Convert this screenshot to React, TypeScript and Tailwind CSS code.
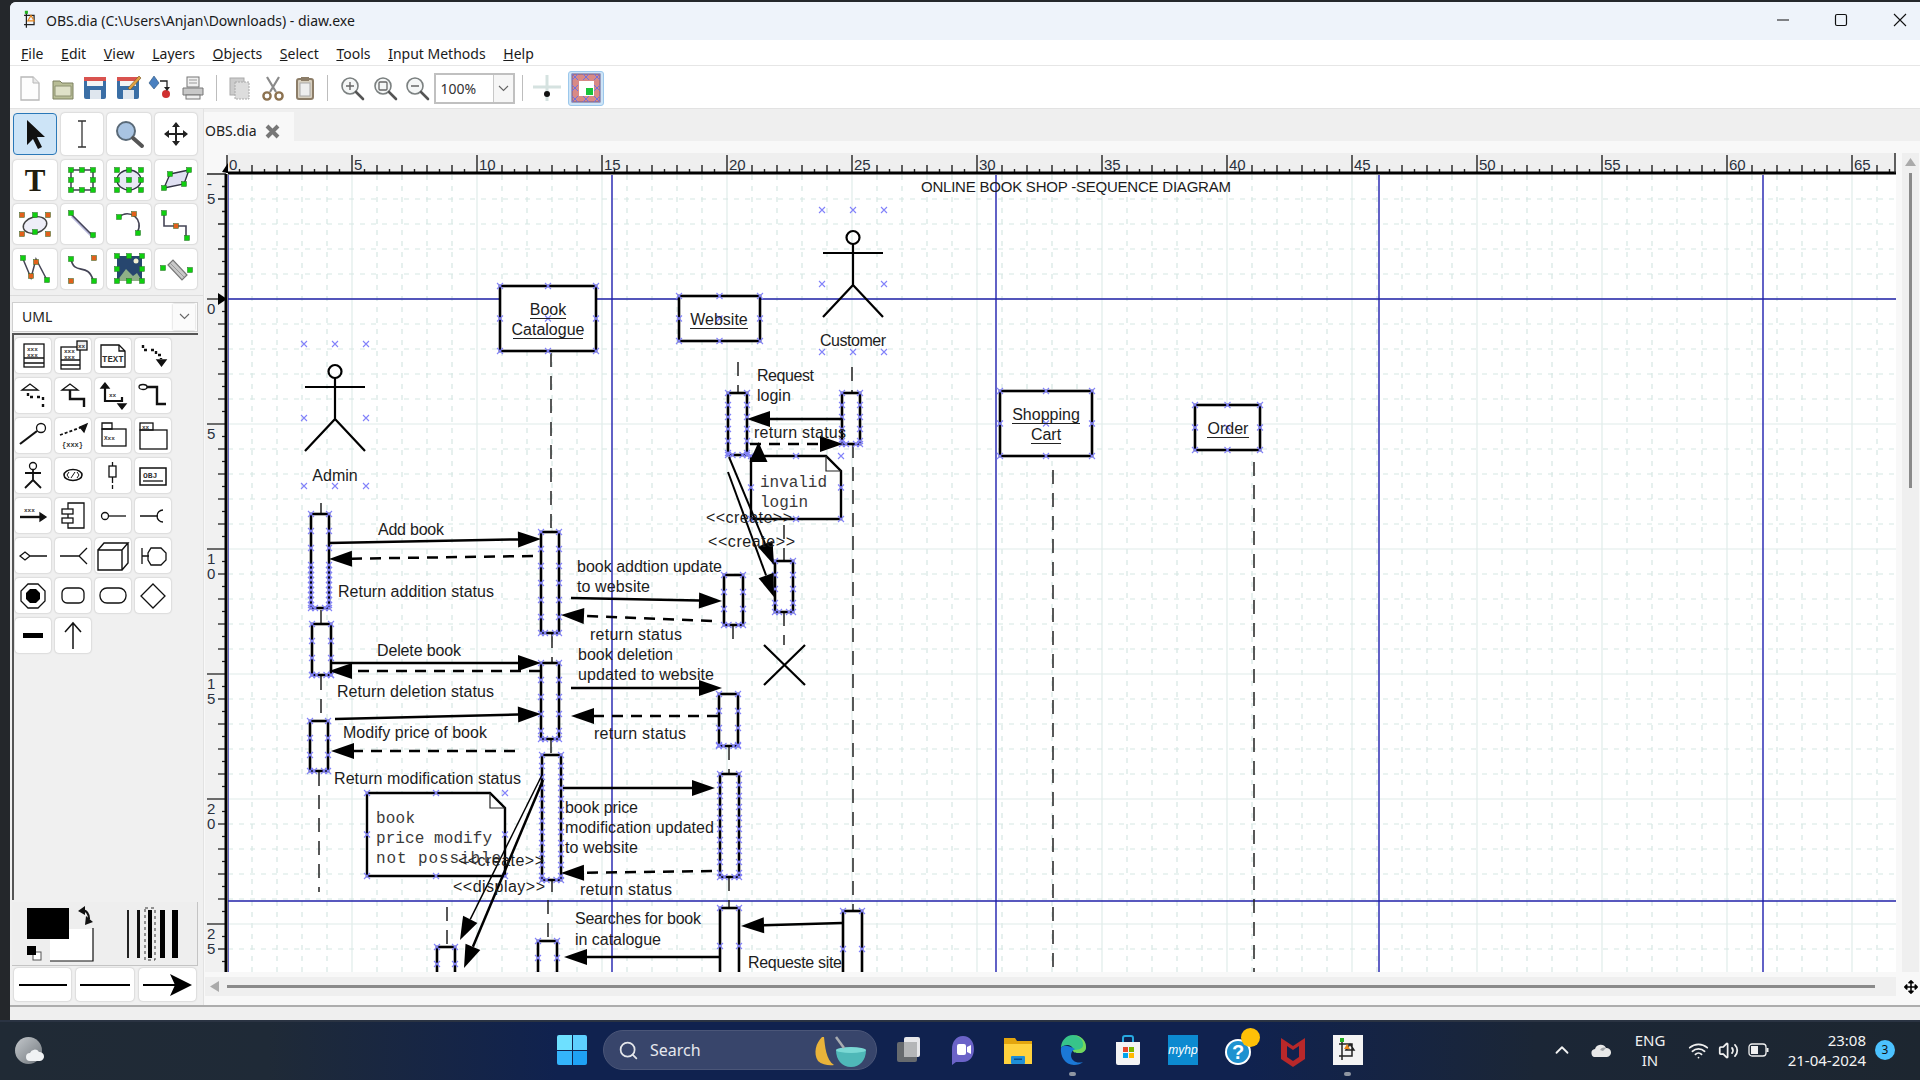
import React from "react";
import { Search, Wifi, Volume2, ChevronUp } from "lucide-react";
import { FaArrowsAlt } from "react-icons/fa";

const sans = "font-['Liberation_Sans',sans-serif]";
const ui = "font-['Noto_Sans',sans-serif]";

const menus = [
  ["F", "ile"],
  ["E", "dit"],
  ["V", "iew"],
  ["L", "ayers"],
  ["O", "bjects"],
  ["S", "elect"],
  ["T", "ools"],
  ["I", "nput Methods"],
  ["H", "elp"],
];

// ---- toolbar icons ----
const Tb = ({ children }: { children: React.ReactNode }) => (
  <div className="w-[32.5px] h-[32px] flex items-center justify-center shrink-0">
    <svg width="28" height="28" viewBox="0 0 28 28">{children}</svg>
  </div>
);
const Sep = ({ cls }: { cls: string }) => <div className={`w-[1px] h-[26px] bg-[#bdbdbd] shrink-0 ${cls}`} />;

const toolbarA = (
  <>
    <Tb>
      <path d="M5 3h12l6 6v17H5z" fill="#fdfdfd" stroke="#b8b8b8" strokeWidth="1.3" />
      <path d="M17 3v6h6" fill="#e8e8e8" stroke="#b8b8b8" />
    </Tb>
    <Tb>
      <path d="M4 7h7l2 2h11v16H4z" fill="#b8bd96" stroke="#7c8060" />
      <path d="M6 12h16v10H6z" fill="#dfe1c8" stroke="#8e9272" />
    </Tb>
    <Tb>
      <rect x="3" y="3" width="22" height="22" rx="2" fill="#3a6ea5" />
      <rect x="6" y="3" width="16" height="9" fill="#f4f4f4" />
      <rect x="3" y="3" width="22" height="4" fill="#d9534f" />
      <rect x="9" y="16" width="11" height="9" fill="#dfe6ee" />
    </Tb>
    <Tb>
      <rect x="3" y="3" width="22" height="22" rx="2" fill="#3a6ea5" />
      <rect x="6" y="3" width="16" height="9" fill="#f4f4f4" />
      <rect x="3" y="3" width="22" height="4" fill="#d9534f" />
      <rect x="9" y="16" width="11" height="9" fill="#dfe6ee" />
      <path d="M14 14L25 2l2 2-11 12z" fill="#e0a040" stroke="#705020" strokeWidth=".6" />
    </Tb>
    <Tb>
      <path d="M8 2l5 7-5 6-5-6z" fill="#4a80c0" stroke="#28507a" strokeWidth=".6" />
      <path d="M14 7h7v6" fill="none" stroke="#222" strokeWidth="1.3" />
      <circle cx="20" cy="20" r="4" fill="#d03030" />
      <path d="M18 13h6l-3 4z" fill="#222" />
    </Tb>
    <Tb>
      <rect x="8" y="3" width="12" height="10" fill="#f0f0f0" stroke="#777" />
      <path d="M10 6h8M10 9h8" stroke="#999" />
      <path d="M4 14h20v7H4z" fill="#c8c8c8" stroke="#777" />
      <rect x="7" y="21" width="14" height="4" fill="#eee" stroke="#777" />
    </Tb>
  </>
);
const toolbarB = (
  <>
    <Tb>
      <rect x="4" y="4" width="14" height="17" fill="#ccc" stroke="#aaa" />
      <rect x="9" y="8" width="14" height="17" fill="#ddd" stroke="#aaa" strokeDasharray="2 1" />
    </Tb>
    <Tb>
      <path d="M8 3l9 15M20 3l-9 15" stroke="#8a8a8a" strokeWidth="2.2" />
      <circle cx="8" cy="22" r="3.6" fill="none" stroke="#8c7250" strokeWidth="2.4" />
      <circle cx="20" cy="22" r="3.6" fill="none" stroke="#8c7250" strokeWidth="2.4" />
    </Tb>
    <Tb>
      <rect x="6" y="5" width="16" height="20" rx="2" fill="#d8d0c0" stroke="#8c7d68" strokeWidth="2" />
      <rect x="9" y="9" width="10" height="13" fill="#eee" stroke="#aaa" />
      <rect x="10" y="3" width="8" height="4" fill="#8c7d68" />
    </Tb>
  </>
);
const Zoom = ({ kind }: { kind: "in" | "fit" | "out" }) => (
  <Tb>
    <circle cx="12" cy="12" r="8" fill="#f4f6f6" stroke="#7b8080" strokeWidth="1.6" />
    <path d="M18 18l7 7" stroke="#555" strokeWidth="2.6" strokeLinecap="round" />
    {kind !== "fit" && <path d="M8 12h8" stroke="#666" strokeWidth="1.4" />}
    {kind === "in" && <path d="M12 8v8" stroke="#666" strokeWidth="1.4" />}
    {kind === "fit" && <rect x="8" y="8" width="8" height="8" rx="1" fill="none" stroke="#666" strokeWidth="1.3" />}
  </Tb>
);

// ---- toolbox icons ----
const G = ({ x, y, c = "#0fd00f" }: { x: number; y: number; c?: string }) => (
  <rect x={x - 2.5} y={y - 2.5} width="5" height="5" fill={c} stroke="#2a6a2a" strokeWidth=".5" />
);
const O = ({ x, y }: { x: number; y: number }) => <G x={x} y={y} c="#e2601a" />;

const Tool = ({ children, on, w, h }: { children: React.ReactNode; on?: boolean; w: string; h: string }) => (
  <div
    className={`${w} ${h} rounded-[4px] flex items-center justify-center ${
      on
        ? "bg-[#cde4f7] border border-[#2a78b8]"
        : "bg-white shadow-[0_0_2px_rgba(0,0,0,0.28)]"
    }`}
  >
    <svg width="40" height="38" viewBox="0 0 40 38">{children}</svg>
  </div>
);

const shade = "#b8b8dc";
const tools: React.ReactNode[] = [
  <path d="M12 5v25l6-6 5 10 4-2-5-10h8z" fill="#111" />,
  <path d="M16 6h8M20 6v26M16 32h8" stroke="#333" strokeWidth="1.3" fill="none" />,
  <>
    <circle cx="17" cy="16" r="9" fill="#a9c4e2" stroke="#5a6a78" strokeWidth="2" />
    <path d="M24 23l9 8" stroke="#555" strokeWidth="4" strokeLinecap="round" />
  </>,
  <path d="M20 7l4 5h-3v6h6v-3l5 4-5 4v-3h-6v6h3l-4 5-4-5h3v-6h-6v3l-5-4 5-4v3h6v-6h-3z" fill="#222" />,
  <text x="20" y="30" textAnchor="middle" fontFamily="Liberation Serif" fontWeight="bold" fontSize="31" fill="#211d10">T</text>,
  <>
    <rect x="9" y="9" width="22" height="20" fill="none" stroke="#334" strokeWidth="1.4" />
    {[[9, 9], [20, 9], [31, 9], [9, 19], [31, 19], [9, 29], [20, 29], [31, 29]].map(([x, y], i) => <G key={i} x={x} y={y} />)}
  </>,
  <>
    <ellipse cx="20" cy="19" rx="12" ry="10" fill="#e8e8f4" stroke="#334" strokeWidth="1.4" />
    {[[8, 9], [20, 9], [32, 9], [8, 19], [32, 19], [8, 29], [20, 29], [32, 29], [20, 19]].map(([x, y], i) => <G key={i} x={x} y={y} />)}
  </>,
  <>
    <path d="M14 13L33 9 28 23 8 27z" fill="#e0e0f2" stroke="#334" strokeWidth="1.4" />
    {[[14, 13], [33, 9], [28, 23], [8, 27]].map(([x, y], i) => <G key={i} x={x} y={y} />)}
  </>,
  <>
    <ellipse cx="20" cy="20" rx="12" ry="8" transform="rotate(-15 20 20)" fill="#eeeef8" stroke="#444" strokeWidth="1.4" />
    <O x={7} y={10} /><O x={33} y={10} /><O x={7} y={29} /><O x={33} y={29} />
    <G x={20} y={10} /><G x={20} y={27} />
  </>,
  <>
    <path d="M9 9l22 22" stroke={shade} strokeWidth="3" transform="translate(1,2)" />
    <path d="M9 9l22 22" stroke="#445" strokeWidth="1.4" />
    <G x={9} y={8} /><G x={31} y={30} />
  </>,
  <>
    <path d="M10 12C20 3 36 14 28 28" fill="none" stroke="#445" strokeWidth="1.6" />
    <G x={10} y={12} /><O x={25} y={9} /><G x={29} y={28} />
  </>,
  <>
    <path d="M8 8v13h22v13" fill="none" stroke="#445" strokeWidth="1.6" />
    <G x={8} y={8} /><O x={20} y={21} /><G x={31} y={33} />
  </>,
  <>
    <path d="M8 9l8 19 5-19 12 23" fill="none" stroke="#445" strokeWidth="1.5" />
    <G x={8} y={8} /><O x={16} y={26} /><O x={21} y={12} /><G x={32} y={30} />
  </>,
  <>
    <path d="M9 9C12 26 26 12 31 30" fill="none" stroke="#445" strokeWidth="1.6" />
    <G x={9} y={9} /><O x={32} y={8} /><O x={9} y={31} /><G x={32} y={31} />
  </>,
  <>
    <rect x="8" y="6" width="25" height="25" fill="#27466e" />
    <path d="M8 31l9-12 7 7 4-3 5 8z" fill="#8fb087" />
    <circle cx="27" cy="11" r="2.5" fill="#f3f0d0" />
    {[[8, 6], [20, 6], [33, 6], [8, 19], [33, 19], [8, 31], [20, 31], [33, 31]].map(([x, y], i) => <G key={i} x={x} y={y} />)}
  </>,
  <>
    <path d="M12 15l5-5 14 15-5 5z" fill="#c8c8c8" stroke="#777" strokeWidth="1.2" />
    <path d="M14 13l14 14" stroke="#999" />
    <G x={7} y={18} /><G x={34} y={20} />
  </>,
];

// ---- sheet icons ----
const mono = { fontFamily: "Liberation Mono", fontWeight: 700 };
const Sh = ({ children }: { children: React.ReactNode }) => (
  <div className="w-[36px] h-[35px] bg-white rounded-[4px] shadow-[0_0_2px_rgba(0,0,0,0.28)] flex items-center justify-center">
    <svg width="34" height="33" viewBox="0 0 34 33" fill="none" stroke="#111" strokeWidth="1.3">{children}</svg>
  </div>
);
const T = ({ x, y, s, t }: { x: number; y: number; s: number; t: string }) => (
  <text x={x} y={y} fontSize={s} fill="#333" stroke="none" style={mono}>{t}</text>
);
const sheet: React.ReactNode[] = [
  <><rect x="8" y="5" width="20" height="23" /><path d="M8 19h20M8 24h20" /><T x={11} y={12} s={6} t="xxx" /><T x={11} y={18} s={6} t="xxx" /></>,
  <><rect x="5" y="8" width="19" height="22" /><path d="M5 21h19M5 26h19" /><T x={8} y={14} s={6} t="xxx" /><T x={8} y={20} s={6} t="xxx" /><rect x="21" y="2" width="10" height="9" fill="#eee" /><T x={22} y={9} s={6} t="xx" /></>,
  <><path d="M5 6h18l6 6v16H5z" /><path d="M23 6v6h6" /><T x={6} y={23} s={9} t="TEXT" /></>,
  <><path d="M7 6v5h5M15 11h5v5h5v4" strokeWidth="2.4" strokeDasharray="3 3" /><path d="M21 21h9l-4.500 6z" fill="#111" /></>,
  <><path d="M6 11l8-6 8 6z" /><path d="M12 14v4h6M21 18h6v3M27 25v3" strokeWidth="2.4" strokeDasharray="3 3" /></>,
  <><path d="M6 11l8-6 8 6z" /><path d="M14 11v9h14v8" strokeWidth="2.4" /></>,
  <><path d="M9 4l-4 5h8zM26 30l-4-5h8z" fill="#111" /><path d="M9 8v14h17v-4" strokeWidth="2.2" /><T x={13} y={18} s={6} t="xx" /></>,
  <><ellipse cx="7" cy="8" rx="4" ry="2.500" /><path d="M11 8h10v17h9" strokeWidth="2.400" /></>,
  <><circle cx="25" cy="9" r="4.500" /><path d="M4 25l17-13" strokeWidth="2.200" /></>,
  <><path d="M4 16l22-8" strokeWidth="1.800" strokeDasharray="3 2" /><path d="M31 5l-3 8-4-5z" fill="#111" /><T x={6} y={28} s={7} t="{xxx}" /></>,
  <><path d="M6 4h10v6H6z" /><rect x="6" y="10" width="24" height="17" /><T x={8} y={21} s={6} t="Xxx" /></>,
  <><rect x="4" y="4" width="13" height="7" /><rect x="4" y="11" width="27" height="19" /><T x={6} y={10} s={6} t="xx" /></>,
  <><circle cx="17" cy="7" r="3.500" /><path d="M17 11v10M9 14h16M17 21l-8 8M17 21l8 8" strokeWidth="1.800" /></>,
  <><ellipse cx="17" cy="16" rx="9" ry="5.500" strokeWidth="1.600" /><path d="M13 13l-2 3 2 3M21 13l2 3-2 3M15 19l4-6" strokeWidth="1" /></>,
  <><rect x="13" y="7" width="7" height="11" /><path d="M16.500 3v4M16.500 18v6M16.500 26v4" /></>,
  <><rect x="4" y="9" width="26" height="17" strokeWidth="1.500" /><T x={7} y={19} s={8} t="OBJ" /><path d="M7 22h20" /></>,
  <><T x={8} y={13} s={6} t="xxx" /><path d="M4 18h22" strokeWidth="2.400" /><path d="M24 14l6 4-6 4z" fill="#111" /></>,
  <><path d="M12 4h16v25H12z" /><rect x="6" y="10" width="11" height="5" fill="#fff" /><rect x="6" y="19" width="11" height="5" fill="#fff" /></>,
  <><circle cx="9" cy="17" r="3.500" /><path d="M13 17h17" /></>,
  <><path d="M4 17h18M27 11a6 6 0 0 0 0 12" /></>,
  <><path d="M4 17l5-4 5 4-5 4zM14 17h17" /></>,
  <><path d="M4 17h20M31 9l-8 8 8 8" /></>,
  <><path d="M2 11h24v20H2zM2 11l6-7h24l-6 7M26 31l6-7V4" strokeWidth="1.400" /></>,
  <><path d="M6 9v16M6 17h7" /><path d="M15 9h10l5 5v7l-5 5H15l-3-5v-7z" /></>,
  <><path d="M12 5h10l7 7v10l-7 7H12l-7-7V12z" /><path d="M14 10h6l4 4v6l-4 4h-6l-4-4v-6z" fill="#000" stroke="none" /></>,
  <><rect x="6" y="9" width="22" height="15" rx="5" /></>,
  <><rect x="4" y="9" width="26" height="15" rx="7" /></>,
  <><path d="M17 5l12 12-12 12L5 17z" /></>,
  <><rect x="7" y="14" width="20" height="5" fill="#000" stroke="none" /></>,
  <><path d="M17 30V5M9 13l8-9 8 9" strokeWidth="1.500" /></>,
];

// ---- diagram helpers ----
const C = ({ x, y }: { x: number; y: number }) => (
  <path d={`M${x - 3} ${y - 3}l6 6m0-6l-6 6`} stroke="#8282fa" strokeWidth="1.100" fill="none" />
);
const Act = ({ x1, y1, x2, y2, step = 17, dense }: { x1: number; y1: number; x2: number; y2: number; step?: number; dense?: number }) => {
  const ys: number[] = [];
  for (let y = y1; y <= y2; y += dense && y >= dense ? 5 : step) ys.push(y);
  return (
    <g>
      <rect x={x1} y={y1} width={x2 - x1} height={y2 - y1} fill="#fff" stroke="#000" strokeWidth="2.6" />
      {ys.map((y) => (
        <g key={y}>
          <C x={x1} y={y} />
          <C x={x2} y={y} />
        </g>
      ))}
      <C x={(x1 + x2) / 2 - 5} y={y2} />
      <C x={(x1 + x2) / 2 + 5} y={y2} />
      <C x={x2} y={y2} />
      <C x={x1} y={y2} />
    </g>
  );
};
const Msg = ({ x1, y1, x2, y2, dash, l = 23, h = 8, sw = 2.5 }: { x1: number; y1: number; x2: number; y2: number; dash?: boolean; l?: number; h?: number; sw?: number }) => {
  const d = Math.hypot(x2 - x1, y2 - y1);
  const ux = (x2 - x1) / d;
  const uy = (y2 - y1) / d;
  const bx = x2 - ux * l;
  const by = y2 - uy * l;
  return (
    <g>
      <line x1={x1} y1={y1} x2={bx} y2={by} stroke="#000" strokeWidth={sw} strokeDasharray={dash ? "11 8" : undefined} />
      <path d={`M${x2} ${y2}L${bx - uy * h} ${by + ux * h}L${bx + uy * h} ${by - ux * h}z`} fill="#000" />
    </g>
  );
};
const L = ({ x, y, w, t, u, mid, size = 16 }: { x: number; y: number; w?: number; t: string; u?: number; mid?: boolean; size?: number }) => (
  <g>
    <text
      x={x}
      y={y}
      fontSize={size}
      fill="#1c1c1c"
      textAnchor={mid ? "middle" : "start"}
      textLength={w}
      lengthAdjust={w ? "spacing" : undefined}
    >
      {t}
    </text>
    {u && <line x1={x - u / 2} x2={x + u / 2} y1={y + 3.500} y2={y + 3.500} stroke="#222" strokeWidth="1" />}
  </g>
);
const M = ({ x, y, t, w }: { x: number; y: number; t: string; w: number }) => (
  <text x={x} y={y} fontSize="16" fontFamily="Liberation Mono" fill="#3a3a3a" textLength={w}>
    {t}
  </text>
);
const Box = ({ x1, y1, x2, y2 }: { x1: number; y1: number; x2: number; y2: number }) => (
  <g>
    <rect x={x1} y={y1} width={x2 - x1} height={y2 - y1} fill="#fff" stroke="#000" strokeWidth="2.6" />
    {[x1, (x1 + x2) / 2, x2].map((x) =>
      [y1, (y1 + y2) / 2, y2].map((y) => <C key={`${x}-${y}`} x={x} y={y} />)
    )}
  </g>
);
const Note = ({ x1, y1, x2, y2, f }: { x1: number; y1: number; x2: number; y2: number; f: number }) => (
  <g>
    <path
      d={`M${x1} ${y1}H${x2 - f}L${x2} ${y1 + f}V${y2}H${x1}z`}
      fill="#fff"
      stroke="#000"
      strokeWidth="2.4"
    />
    <path d={`M${x2 - f} ${y1}v${f}h${f}`} fill="none" stroke="#222" strokeWidth="1.2" />
    {[x1, (x1 + x2) / 2, x2].map((x) => [y1, y2].map((y) => <C key={`${x}-${y}`} x={x} y={y} />))}
    <C x={x1} y={(y1 + y2) / 2} />
    <C x={x2} y={(y1 + y2) / 2} />
  </g>
);
const Actor = ({ cx, top }: { cx: number; top: number }) => (
  <g stroke="#000" fill="none">
    <circle cx={cx} cy={top + 6.500} r="6.500" strokeWidth="2.2" />
    <path d={`M${cx - 30} ${top + 22}h60M${cx} ${top + 13}v41l-30 32M${cx} ${top + 54}l30 32`} strokeWidth="2.2" />
    {[cx - 31, cx, cx + 31].map((x) => <C key={x} x={x} y={top - 21} />)}
    {[cx - 31, cx + 31].map((x) => <C key={x} x={x} y={top + 53} />)}
    {[cx - 31, cx, cx + 31].map((x) => <C key={x} x={x} y={top + 121} />)}
  </g>
);
const Life = ({ x, y1, y2 }: { x: number; y1: number; y2: number }) => (
  <line x1={x} y1={y1} x2={x} y2={y2} stroke="#222" strokeWidth="1.5" strokeDasharray="14 9" />
);

const xs = Array.from({ length: 67 }, (_, i) => 227 + i * 25);
const ys = Array.from({ length: 33 }, (_, i) => 174 + i * 25);

const TopRuler = () => {
  const t = Array.from({ length: 134 }, (_, i) => i);
  return (
    <g>
      <rect x="228" y="153" width="1668" height="21" fill="#efefef" />
      {t.map((i) => {
        const x = 227 + i * 12.5;
        const h = i % 10 === 0 ? 18 : i % 2 === 0 ? 8 : 4;
        return <line key={i} x1={x} x2={x} y1={173} y2={173 - h} stroke="#222" strokeWidth="1.4" />;
      })}
      {t.filter((i) => i % 10 === 0).map((i) => (
        <text key={i} x={229 + i * 12.5} y={170} fontSize="15" fill="#2a3140">{i / 2}</text>
      ))}
      <line x1="228" x2="1896" y1="173" y2="173" stroke="#000" strokeWidth="3" />
      <line x1="1895" x2="1895" y1="153" y2="173" stroke="#222" strokeWidth="1.4" />
      <path d="M228 163v10l-6-1z" fill="#000" />
    </g>
  );
};
const SideRuler = () => {
  const t = Array.from({ length: 66 }, (_, i) => i);
  const labels = [["-", "5"], ["0"], ["5"], ["1", "0"], ["1", "5"], ["2", "0"], ["2", "5"]];
  return (
    <g>
      <rect x="205" y="174" width="22" height="798" fill="#f1f1f1" />
      {t.map((i) => {
        const y = 174 + i * 12.5;
        const w = i % 10 === 0 ? 19 : i % 2 === 0 ? 8 : 4;
        return <line key={i} y1={y} y2={y} x1={226} x2={226 - w} stroke="#222" strokeWidth="1.3" />;
      })}
      {labels.map((l, i) =>
        l.map((c, j) => (
          <text key={`${i}${j}`} x={207} y={(i === 0 ? 189 : 174 + i * 125 + 15) + j * 15} fontSize="15" fill="#2a3140">{c}</text>
        ))
      )}
      <line x1="226" x2="226" y1="174" y2="972" stroke="#000" strokeWidth="3" />
      <path d="M218 293l9 6-9 6z" fill="#000" />
    </g>
  );
};

const Diagram = () => (
  <svg
    className={`block shrink-0 ${sans}`}
    width="1691"
    height="819"
    viewBox="205 153 1691 819"
  >
    <defs>
      <clipPath id="page">
        <rect x="228" y="175" width="1668" height="797" />
      </clipPath>
    </defs>
    <TopRuler />
    <SideRuler />
    <g clipPath="url(#page)">
      <rect x="228" y="175" width="1668" height="797" fill="#fff" />
      {xs.map((x, i) => (
        <line key={x} x1={x} x2={x} y1="175" y2="972" stroke={i % 5 === 0 ? "#e0ecea" : "#d6e7e3"} strokeWidth="1.2" strokeDasharray={i % 5 === 0 ? undefined : "5 6"} />
      ))}
      {ys.map((y, i) => (
        <line key={y} y1={y} y2={y} x1="228" x2="1896" stroke={i % 5 === 0 ? "#e0ecea" : "#d6e7e3"} strokeWidth="1.2" strokeDasharray={i % 5 === 0 ? undefined : "5 6"} />
      ))}
      {[228, 612, 996, 1379, 1763].map((x) => (
        <line key={x} x1={x} x2={x} y1="175" y2="972" stroke="#3a3ab8" strokeWidth="1.6" />
      ))}
      {[299, 901].map((y) => (
        <line key={y} y1={y} y2={y} x1="228" x2="1896" stroke="#2020a8" strokeWidth="1.5" />
      ))}

      {/* lifelines */}
      <Life x={321} y1={503} y2={516} />
      <Life x={321} y1={610} y2={624} />
      <Life x={321} y1={676} y2={722} />
      <Life x={319} y1={772} y2={892} />
      <Life x={551} y1={353} y2={532} />
      <Life x={552} y1={634} y2={663} />
      <Life x={551} y1={739} y2={755} />
      <Life x={552} y1={881} y2={892} />
      <Life x={548} y1={900} y2={941} />
      <Life x={447} y1={907} y2={947} />
      <Life x={738} y1={362} y2={393} />
      <Life x={733} y1={625} y2={645} />
      <Life x={729} y1={746} y2={774} />
      <Life x={729} y1={877} y2={908} />
      <Life x={852} y1={367} y2={393} />
      <Life x={853} y1={444} y2={911} />
      <Life x={784} y1={525} y2={561} />
      <Life x={784} y1={612} y2={645} />
      <Life x={1053} y1={470} y2={972} />
      <Life x={1254} y1={462} y2={972} />

      {/* objects */}
      <Box x1={500} y1={286} x2={596} y2={351} />
      <Box x1={679} y1={296} x2={760} y2={341} />
      <Box x1={1000} y1={391} x2={1092} y2={456} />
      <Box x1={1195} y1={405} x2={1260} y2={450} />
      <Actor cx={853} top={231} />
      <Actor cx={335} top={365} />
      <Note x1={751} y1={456} x2={841} y2={519} f={15} />
      <Note x1={367} y1={793} x2={505} y2={876} f={15} />

      {/* activations */}
      <Act x1={311} y1={514} x2={329} y2={608} dense={560} />
      <Act x1={312} y1={624} x2={331} y2={675} />
      <Act x1={310} y1={721} x2={328} y2={771} />
      <Act x1={541} y1={532} x2={559} y2={633} />
      <Act x1={541} y1={663} x2={559} y2={739} />
      <Act x1={542} y1={755} x2={561} y2={880} step={11} />
      <Act x1={538} y1={941} x2={557} y2={1000} />
      <Act x1={728} y1={393} x2={747} y2={455} step={12} />
      <Act x1={842} y1={393} x2={860} y2={444} step={12} />
      <Act x1={724} y1={575} x2={743} y2={625} />
      <Act x1={775} y1={561} x2={793} y2={612} step={14} />
      <Act x1={719} y1={694} x2={738} y2={746} />
      <Act x1={720} y1={774} x2={739} y2={877} step={11} />
      <Act x1={720} y1={908} x2={739} y2={1000} step={38} />
      <Act x1={843} y1={911} x2={862} y2={1000} step={38} />
      <Act x1={437} y1={947} x2={455} y2={1000} />

      {/* messages */}
      <Msg x1={329} y1={543} x2={541} y2={539} />
      <Msg x1={533} y1={556} x2={329} y2={559} dash />
      <Msg x1={571} y1={598} x2={722} y2={601} />
      <Msg x1={712} y1={621} x2={561} y2={615} dash />
      <Msg x1={332} y1={663} x2={541} y2={663} />
      <Msg x1={540} y1={671} x2={329} y2={671} dash />
      <Msg x1={335} y1={719} x2={541} y2={714} />
      <Msg x1={571} y1={688} x2={722} y2={688} />
      <Msg x1={718} y1={716} x2={571} y2={716} dash />
      <Msg x1={515} y1={751} x2={331} y2={751} dash />
      <Msg x1={563} y1={788} x2={715} y2={788} />
      <Msg x1={712} y1={871} x2={561} y2={873} dash />
      <Msg x1={842} y1={419} x2={747} y2={419} />
      <Msg x1={750} y1={444} x2={843} y2={444} dash />
      <path d="M758.500 442l9 20h-18z" fill="#000" />
      <Msg x1={729} y1={457} x2={774} y2={565} sw={2} />
      <Msg x1={728} y1={472} x2={774} y2={597} sw={2} />
      <Msg x1={542} y1={775} x2={460} y2={940} sw={1.5} />
      <Msg x1={543} y1={780} x2={464} y2={968} sw={2.5} />
      <Msg x1={842} y1={923} x2={741} y2={926} />
      <Msg x1={720} y1={957} x2={564} y2={957} />

      {/* X */}
      <path d="M764 645l41 40M805 645l-41 40" stroke="#000" strokeWidth="2.200" />

      {/* labels */}
      <L x={921} y={192} w={310} t="ONLINE BOOK SHOP -SEQUENCE DIAGRAM" size={15} />
      <L x={548} y={315} mid u={36} t="Book" />
      <L x={548} y={335} mid u={70} t="Catalogue" />
      <L x={719} y={325} mid u={58} t="Website" />
      <L x={1046} y={420} mid u={68} t="Shopping" />
      <L x={1046} y={440} mid u={30} t="Cart" />
      <L x={1228} y={434} mid u={42} t="Order" />
      <L x={853} y={346} mid w={66} t="Customer" />
      <L x={335} y={481} mid t="Admin" />
      <L x={757} y={381} w={57} t="Request" />
      <L x={757} y={401} t="login" />
      <L x={754} y={438} w={92} t="return status" />
      <L x={378} y={535} w={66} t="Add book" />
      <L x={338} y={597} w={156} t="Return addition status" />
      <L x={577} y={572} w={145} t="book addtion update" />
      <L x={577} y={592} w={73} t="to website" />
      <L x={590} y={640} w={92} t="return status" />
      <L x={578} y={660} w={95} t="book deletion" />
      <L x={578} y={680} w={136} t="updated to website" />
      <L x={377} y={656} w={84} t="Delete book" />
      <L x={337} y={697} w={157} t="Return deletion status" />
      <L x={343} y={738} w={144} t="Modify price of book" />
      <L x={594} y={739} w={92} t="return status" />
      <L x={334} y={784} w={187} t="Return modification status" />
      <L x={565} y={813} t="book price" w={73} />
      <L x={565} y={833} t="modification updated" w={149} />
      <L x={565} y={853} t="to website" w={73} />
      <L x={580} y={895} w={92} t="return status" />
      <L x={575} y={924} w={126} t="Searches for book" />
      <L x={575} y={945} w={86} t="in catalogue" />
      <L x={748} y={968} w={94} t="Requeste site" />
      <L x={706} y={523} w={86} t="<<create>>" />
      <L x={708} y={547} w={87} t="<<create>>" />
      <M x={760} y={487} w={67} t="invalid" />
      <M x={760} y={507} w={48} t="login" />
      <M x={376} y={823} w={39} t="book" />
      <M x={376} y={843} w={116} t="price modify" />
      <M x={376} y={863} w={125} t="not possible" />
      <L x={458} y={866} w={86} t="<<create>>" />
      <L x={453} y={892} w={92} t="<<display>>" />
    </g>
  </svg>
);

// ---- taskbar icons ----
const Bar = ({ children, w = 30 }: { children: React.ReactNode; w?: number }) => (
  <svg width={w} height="36" viewBox="0 0 30 36">{children}</svg>
);
const taskIcons: React.ReactNode[] = [
  <Bar>
    <rect x="4" y="10" width="20" height="20" rx="2" fill="#666a6e" />
    <rect x="11" y="5" width="16" height="20" rx="2" fill="#f2f2f2" opacity=".95" />
    <rect x="11" y="10" width="13" height="15" fill="#b4b6b8" />
  </Bar>,
  <Bar>
    <path d="M15 4c7 0 11 6 11 13s-4 13-11 13H8l-4 3V17C4 10 8 4 15 4z" fill="#6b63c8" />
    <rect x="9" y="12" width="9" height="11" rx="2" fill="#fff" />
    <path d="M19 15l4-2v9l-4-2z" fill="#fff" />
  </Bar>,
  <Bar>
    <path d="M1 6h11l2 3h15v23H1z" fill="#e3a50e" />
    <path d="M1 12h28v20H1z" fill="#ffd23e" />
    <rect x="8" y="24" width="14" height="8" rx="1" fill="#1f8fd8" />
    <rect x="11" y="26.500" width="8" height="1.500" fill="#0d4d8a" />
  </Bar>,
  <Bar>
    <path d="M15 3c8 0 13 6 13 12 0 4-3 6-7 6-2 0-6 0-6-3 0-5-8-7-12-2C3 9 8 3 15 3z" fill="#37c48a" />
    <path d="M3 16c-1 8 4 17 13 17 4 0 7-1 9-3-6 2-12-1-12-7 0-3 2-5 4-6-5-3-12-5-14-1z" fill="#1b78d6" />
    <path d="M15 18c0 3 4 3 6 3 4 0 7-2 7-6 0-6-5-12-13-12 7 1 11 6 10 11-1 3-5 4-10 4z" fill="#8fe04a" opacity=".7" />
  </Bar>,
  <Bar>
    <path d="M3 10h24v21a2 2 0 0 1-2 2H5a2 2 0 0 1-2-2z" fill="#f4f4f4" />
    <path d="M10 10V6a2 2 0 0 1 2-2h6a2 2 0 0 1 2 2v4" fill="none" stroke="#27a9e0" strokeWidth="2" />
    <rect x="10" y="15" width="5" height="5" fill="#e8492c" />
    <rect x="16" y="15" width="5" height="5" fill="#7bb800" />
    <rect x="10" y="21" width="5" height="5" fill="#00a4ef" />
    <rect x="16" y="21" width="5" height="5" fill="#ffb900" />
  </Bar>,
  <div className="w-[30px] h-[30px] bg-[#0c8ad0] flex items-center justify-center">
    <span className="text-white text-[12px] italic font-['Liberation_Sans',sans-serif]">myhp</span>
  </div>,
  <div className="relative w-[30px] h-[36px]">
    <svg width="30" height="36" viewBox="0 0 30 36">
      <circle cx="15" cy="20" r="13" fill="#fff" />
      <circle cx="15" cy="20" r="11" fill="#1f92d0" />
      <text x="15" y="27" textAnchor="middle" fontSize="20" fontWeight="bold" fill="#fff" fontFamily="Liberation Sans">?</text>
    </svg>
    <span className="absolute right-[-7px] top-[-4px] w-[19px] h-[19px] rounded-full bg-[#ffc107]" />
  </div>,
  <Bar>
    <path d="M3 6l12 8 12-8v21l-12 8-12-8z" fill="#b8282a" />
    <path d="M9 14l6 4 6-4v11l-6 4-6-4z" fill="#10224f" />
  </Bar>,
  <div className="w-[30px] h-[30px] bg-[#f4f4f4] flex items-center justify-center">
    <svg width="26" height="26" viewBox="0 0 26 26">
      <path d="M7 3v20M4 7h13v12H4M11 13l4-6 4 6z" fill="none" stroke="#222" strokeWidth="1.500" />
      <path d="M9 12l3-5 3 5z" fill="#e8871c" />
      <rect x="5" y="1" width="4" height="4" fill="#22b022" />
    </svg>
  </div>,
];

const App = () => (
  <div className="w-[1920px] h-[1080px] flex flex-col bg-[#24272b] overflow-hidden">
    <div className="flex-1 min-h-0 pl-[10px] pt-[2px] flex">
      <div className={`flex-1 flex flex-col bg-[#f0f0f0] rounded-tl-[6px] overflow-hidden ${ui}`}>
        {/* title bar */}
        <div className="h-[38px] shrink-0 bg-[#eef3fa] flex items-center pl-[11px] pb-[2px]">
          <svg width="20" height="20" viewBox="0 0 26 26">
            <path d="M7 3v20M4 7h13v12H4" fill="none" stroke="#222" strokeWidth="1.600" />
            <path d="M9 14l4-7 4 7z" fill="none" stroke="#e8871c" strokeWidth="1.600" />
            <rect x="5" y="1" width="4" height="4" fill="#22b022" />
          </svg>
          <span className="ml-[5px] text-[14px] text-[#1a1a1a]">OBS.dia (C:\Users\Anjan\Downloads) - diaw.exe</span>
          <div className="ml-auto flex items-center text-[#111]">
            <svg className="mr-[44px]" width="14" height="14" viewBox="0 0 14 14"><path d="M1 7h12" stroke="#111" strokeWidth="1.200" /></svg>
            <svg className="mr-[45px]" width="14" height="14" viewBox="0 0 14 14"><rect x="1.500" y="1.500" width="11" height="11" rx="1.500" fill="none" stroke="#111" strokeWidth="1.200" /></svg>
            <svg className="mr-[13px]" width="14" height="14" viewBox="0 0 14 14"><path d="M1 1l12 12M13 1L1 13" stroke="#111" strokeWidth="1.100" /></svg>
          </div>
        </div>
        {/* menu bar */}
        <div className="h-[26px] shrink-0 bg-white border-b border-[#e6e6e6] flex items-center pl-[11px] pt-[2px] gap-[17.700px] text-[14px] leading-none text-[#1a1a1a]">
          {menus.map(([a, b]) => (
            <span key={a}>
              <u>{a}</u>
              {b}
            </span>
          ))}
        </div>
        {/* toolbar */}
        <div className="h-[43px] shrink-0 bg-white border-b border-[#e2e2e2] flex items-center pl-[4px] pt-[2px]">
          {toolbarA}
          <Sep cls="ml-[7px]" />
          <div className="w-[7px]" />
          {toolbarB}
          <Sep cls="ml-[5.500px]" />
          <div className="w-[8px]" />
          <Zoom kind="in" />
          <Zoom kind="fit" />
          <Zoom kind="out" />
          <div className="w-[81px] h-[31px] border-2 border-[#c0c0c0] bg-white flex items-center shrink-0">
            <span className="pl-[5px] flex-1 text-[14px] text-[#333]">100%</span>
            <span className="w-[20px] h-full border-l border-[#c8c8c8] bg-[#f6f6f6] flex items-center justify-center">
              <svg width="11" height="7" viewBox="0 0 11 7"><path d="M1 1l4.500 4.500L10 1" fill="none" stroke="#666" strokeWidth="1.100" /></svg>
            </span>
          </div>
          <Sep cls="ml-[7px]" />
          <div className="w-[8px]" />
          <Tb>
            <path d="M14 1v26M0 13h28" stroke="#d5e2e0" strokeWidth="3" />
            <circle cx="14" cy="20" r="3" fill="#111" />
          </Tb>
          <div className="ml-[4.500px] w-[36px] h-[35px] rounded-[3px] bg-[#cde4f7] border border-[#9cc8ec] flex items-center justify-center shrink-0">
            <svg width="30" height="30" viewBox="0 0 30 30">
              <rect x="1" y="1" width="28" height="28" fill="#d88a86" stroke="#6a5a8a" />
              <rect x="8" y="8" width="15" height="15" fill="#fff" />
              <rect x="15" y="15" width="7" height="7" fill="#19c43a" />
              {[[4, 4], [15, 4], [26, 4], [4, 15], [26, 15], [4, 26], [15, 26], [26, 26]].map(([x, y]) => (
                <path key={`${x}${y}`} d={`M${x - 3} ${y - 3}l6 6m0-6l-6 6`} stroke="#7070e0" strokeWidth="1" />
              ))}
            </svg>
          </div>
        </div>

        {/* body */}
        <div className="flex-1 min-h-0 flex">
          {/* toolbox */}
          <div className="w-[194px] shrink-0 flex flex-col pt-[4px] pb-[4px] border-r border-[#e2e2e2]">
            <div className="pl-[3px] grid grid-cols-[44px_42px_44px_42px] grid-rows-[42px_40px_40px_40px] gap-x-[4px] gap-y-[4.500px]">
              {tools.map((t, i) => (
                <Tool key={i} on={i === 0} w="w-full" h="h-full">{t}</Tool>
              ))}
            </div>
            <div className="mt-[6px] h-[1px] bg-[#dcdcdc]" />
            <div className="mt-[6px] ml-[2px] w-[186px] h-[30px] bg-white border border-[#cfcfcf] flex items-center shrink-0">
              <span className="pl-[9px] flex-1 text-[14px] text-[#222]">UML</span>
              <span className="w-[22px] h-[26px] mr-[2px] bg-[#fbfbfb] shadow-[0_0_2px_rgba(0,0,0,0.25)] flex items-center justify-center">
                <svg width="11" height="7" viewBox="0 0 11 7"><path d="M1 1l4.500 4.500L10 1" fill="none" stroke="#666" strokeWidth="1.100" /></svg>
              </span>
            </div>
            <div className="mt-[1px] ml-[2px] w-[186px] flex-1 min-h-0 border-l-2 border-t-2 border-[#555] pl-[1px] pt-[3px]">
              <div className="grid grid-cols-[repeat(4,36px)] auto-rows-[35px] gap-x-[4px] gap-y-[5px]">
                {sheet.map((s, i) => (
                  <Sh key={i}>{s}</Sh>
                ))}
              </div>
            </div>
            <div className="mt-[2px] ml-[2px] w-[186px] h-[64px] shrink-0 bg-[#eeeeee] border-b border-r border-[#c4c4c4]">
              <svg width="186" height="64" viewBox="0 0 186 64">
                <rect x="38" y="27" width="43" height="32" fill="#fff" />
                <path d="M38 59h43V26" fill="none" stroke="#111" strokeWidth="1.200" />
                <rect x="15" y="6" width="42" height="31" fill="#000" />
                <path d="M66 9l7-5v9zM81 20l-8 3 1-9z" fill="#111" />
                <path d="M71 8c4 1 6 4 6 9" fill="none" stroke="#111" strokeWidth="2.200" />
                <rect x="21" y="50" width="8" height="8" fill="#fff" stroke="#555" />
                <rect x="15" y="44" width="9" height="9" fill="#000" />
                <rect x="115" y="8" width="2" height="48" fill="#222" />
                <rect x="125" y="8" width="3" height="48" fill="#111" />
                <rect x="136" y="8" width="4" height="48" fill="#000" />
                <rect x="133" y="6" width="10" height="52" fill="none" stroke="#333" strokeDasharray="3 3" />
                <rect x="148" y="8" width="5" height="48" fill="#000" />
                <rect x="160" y="8" width="6" height="48" fill="#000" />
              </svg>
            </div>
            <div className="mt-[2px] pl-[4px] h-[33px] shrink-0 flex gap-[5px]">
              <div className="w-[57px] bg-white rounded-[4px] shadow-[0_0_2px_rgba(0,0,0,0.28)] flex items-center justify-center">
                <div className="w-[48px] h-[2px] bg-black" />
              </div>
              <div className="w-[58px] bg-white rounded-[4px] shadow-[0_0_2px_rgba(0,0,0,0.28)] flex items-center justify-center">
                <div className="w-[50px] h-[2px] bg-black" />
              </div>
              <div className="w-[57px] bg-white rounded-[4px] shadow-[0_0_2px_rgba(0,0,0,0.28)] flex items-center justify-center">
                <svg width="50" height="24" viewBox="0 0 50 24"><path d="M0 12h32" stroke="#000" strokeWidth="2" /><path d="M27 1l22 11-22 11 5-11z" fill="#000" /></svg>
              </div>
            </div>
          </div>

          {/* document area */}
          <div className="flex-1 min-w-0 flex flex-col">
            <div className="h-[32px] shrink-0 bg-[#efefef] flex items-end">
              <div className="h-[29px] w-[90px] bg-[#f8f8f8] flex items-center pl-[1px] pt-[9px]">
                <span className="text-[14px] text-[#222] leading-none">OBS.dia</span>
                <svg className="ml-[8px]" width="15" height="15" viewBox="0 0 15 15"><path d="M2 2l11 11M13 2L2 13" stroke="#777" strokeWidth="4" /></svg>
              </div>
            </div>
            <div className="flex-1 min-h-0 bg-[#f8f8f8] flex flex-col pl-[1px] pt-[12px]">
              <div className="flex">
                <Diagram />
                <div className="ml-[6px] w-[17px] h-[819px] bg-[#efefef] flex flex-col items-center relative shrink-0">
                  <svg className="mt-[5px]" width="11" height="8" viewBox="0 0 11 8"><path d="M5.500 0l5.500 8H0z" fill="#aaa" /></svg>
                  <div className="mt-[7px] w-[3px] h-[315px] bg-[#8a8a8a]" />
                </div>
              </div>
              <div className="mt-[5px] flex items-center">
                <div className="w-[1691px] h-[19px] bg-[#efefef] flex items-center pl-[5px] shrink-0">
                  <svg width="9" height="11" viewBox="0 0 9 11"><path d="M0 5.500l9-5.500v11z" fill="#aaa" /></svg>
                  <div className="ml-[8px] w-[1648px] h-[3px] bg-[#8a8a8a]" />
                </div>
                <FaArrowsAlt className="ml-[8px] text-black" size={14} />
              </div>
            </div>
          </div>
        </div>

        {/* status bar */}
        <div className="h-[15px] shrink-0 bg-[#efefef] border-t-2 border-[#adadad]" />
      </div>
    </div>

    {/* taskbar */}
    <div className={`h-[60px] shrink-0 pb-[2px] border-t-2 border-[#2a3342] bg-[linear-gradient(90deg,#202a35_0%,#1f2a37_14%,#10224f_29%,#10224f_65%,#1b2636_80%,#1d2630_100%)] flex items-center relative ${ui}`}>
      <div className="ml-[15px] relative w-[27px] h-[27px] rounded-full bg-[linear-gradient(135deg,#c4c8cc,#70767c)] shrink-0">
        <svg className="absolute left-[10px] top-[11px]" width="20" height="14" viewBox="0 0 20 14"><path d="M5 13a4 4 0 0 1 0-8 5 5 0 0 1 9-1 4.500 4.500 0 0 1 1 9z" fill="#f0f2f4" /></svg>
      </div>
      <div className="ml-[515px] w-[30px] h-[30px] grid grid-cols-2 gap-[1px] shrink-0">
        <span className="bg-[#6ee0ff] rounded-tl-[2px]" />
        <span className="bg-[#5ed0ff] rounded-tr-[2px]" />
        <span className="bg-[#34b4fb] rounded-bl-[2px]" />
        <span className="bg-[#1fa2f5] rounded-br-[2px]" />
      </div>
      <div className="ml-[16px] w-[274px] h-[40px] rounded-full bg-[#38456b] border border-[#4b5678] flex items-center pl-[14px] relative shrink-0">
        <Search className="text-[#e4e6ea]" size={21} strokeWidth={2} />
        <span className="ml-[11px] text-[#e6e8ee] text-[16px]">Search</span>
        <svg className="absolute right-[10px] top-[3px]" width="54" height="34" viewBox="0 0 54 34">
          <path d="M10 3c-6 6-9 16-4 24 4 4 12 5 16 4C14 26 13 12 12 3z" fill="#e9b33a" />
          <path d="M24 16h30c0 10-6 17-15 17S24 26 24 16z" fill="#4fb8b8" />
          <ellipse cx="39" cy="16" rx="15" ry="3" fill="#7ad8d4" />
          <path d="M32 14L24 3" stroke="#a8acb0" strokeWidth="2.500" />
        </svg>
      </div>
      <div className="ml-[16px] flex items-center gap-[25px] shrink-0">
        {taskIcons.map((t, i) => (
          <div key={i} className="w-[30px] h-[36px] flex items-center justify-center relative">
            {t}
            {(i === 3 || i === 8) && <span className="absolute bottom-[-8px] left-[11px] w-[7px] h-[4px] rounded-full bg-[#8f96a2]" />}
          </div>
        ))}
      </div>

      <div className="ml-auto flex items-center text-white shrink-0">
        <ChevronUp className="text-[#f2f2f2]" size={22} strokeWidth={2} />
        <svg className="ml-[18px]" width="21" height="13" viewBox="0 0 21 13"><path d="M5 13a4 4 0 0 1-1-8 6 6 0 0 1 11-1 4.500 4.500 0 0 1 1 9z" fill="#e8e8e8" /><path d="M9 6a5 5 0 0 1 6-2l-3 3z" fill="#a0a4a8" /></svg>
        <div className="ml-[20px] w-[36px] text-center text-[15px] leading-[20px] text-[#f0f0f0]">
          <div>ENG</div>
          <div>IN</div>
        </div>
        <Wifi className="ml-[20px] text-[#f0f0f0]" size={21} />
        <Volume2 className="ml-[9px] text-[#f0f0f0]" size={21} />
        <svg className="ml-[9px]" width="21" height="14" viewBox="0 0 21 14"><rect x="1" y="1" width="17" height="12" rx="3" fill="none" stroke="#f0f0f0" strokeWidth="1.300" /><rect x="3" y="3" width="7" height="8" fill="#f0f0f0" /><rect x="18.500" y="5" width="2" height="4" fill="#f0f0f0" /></svg>
        <div className="ml-[13px] w-[84px] text-right text-[15px] leading-[20px] text-[#f4f4f4]">
          <div>23:08</div>
          <div>21-04-2024</div>
        </div>
        <span className="ml-[9px] mr-[25px] w-[20px] h-[20px] rounded-full bg-[#4cc2ff] text-[#111] text-[12px] flex items-center justify-center">3</span>
      </div>
    </div>
  </div>
);

export default App;
